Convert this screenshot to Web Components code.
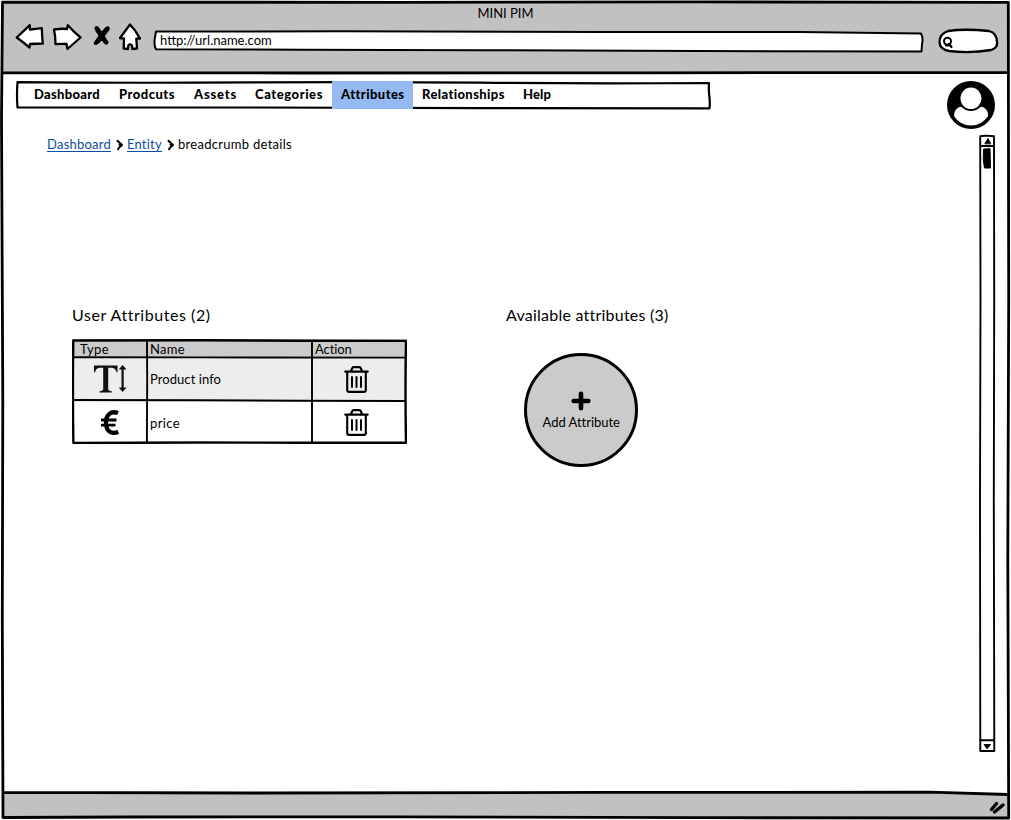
<!DOCTYPE html>
<html lang="en">
<head>
<meta charset="utf-8">
<title>MINI PIM</title>
<style>
html,body{margin:0;background:#fff;overflow:hidden}
body{font-family:Lato,"Open Sans",sans-serif;font-size:13px;color:#000}
</style>
</head>
<body>
<pim-app></pim-app>
<script>
const base = `<style>
*{box-sizing:border-box}
:host{display:block;position:relative}
svg{display:block;flex:none;fill:none;stroke:#000;stroke-linecap:round;stroke-linejoin:round}
.outline{position:absolute;left:0;top:0;pointer-events:none;overflow:visible}
</style>`;
function define(name, html, after) {
  const t = document.createElement('template');
  t.innerHTML = base + html;
  customElements.define(name, class extends HTMLElement {
    constructor() {
      super();
      this.attachShadow({mode: 'open'}).append(t.content.cloneNode(true));
    }
    connectedCallback() { if (after) after.call(this); }
  });
}

// A single-line label that spreads its letters over the width in "w".
define('ink-text', `<style>:host{display:inline-block;white-space:nowrap;flex:none}span{display:inline-block}</style><span><slot></slot></span>`, function () {
  const w = +this.getAttribute('w');
  const n = this.textContent.length;
  const natural = this.shadowRoot.querySelector('span').getBoundingClientRect().width;
  this.style.letterSpacing = ((w - natural) / n).toFixed(3) + 'px';
  this.style.width = w + 'px';
});

define('url-field', `<style>
:host{width:771px;height:24px;flex:none;padding-left:7px;line-height:22px}
ink-text{z-index:1}
</style>
<svg class="outline" width="771" height="24" viewBox="153 29 771 24"><path fill="#fff" stroke-width="2" d="M156 31.5L340 31.3L600 32L800 32L921 33.4Q923.5 38 922 44L921.5 51.5L700 51L480 50.2L300 49.7L156 49.2Q153.500 45 155 37Z"/></svg>
<ink-text w="115"><slot></slot></ink-text>`);

define('search-field', `<style>:host{width:61px;height:27px;flex:none}</style>
<svg width="61" height="27" viewBox="938 27 61 27"><path fill="#fff" stroke-width="2.300" d="M948 31Q965 28.500 989 31Q997 33 997 42Q998 48 991 50Q970 53.500 949 51Q939.500 49 939.500 42Q939.500 34 948 31Z"/><circle cx="947.500" cy="41.300" r="3.500" stroke-width="2"/><path stroke-width="2.200" d="M949 44L951.500 47M946 45.500L950 45.500"/></svg>`);

define('browser-bar', `<style>
:host{height:73px;background:#c1c1c1}
.title{height:22px;line-height:26px;display:flex;justify-content:center}
.tools{height:32px;display:flex;align-items:flex-start;padding-left:13px}
.tools svg{height:32px}
url-field{margin:7px 14px 0 12px}
search-field{margin-top:5px}
</style>
<div class="title"><ink-text w="56">MINI PIM</ink-text></div>
<div class="tools">
<svg width="38" viewBox="15 22 38 32"><path fill="#fff" stroke-width="2.300" d="M16.700 37.500L29.800 25.200L29.800 29.500Q36 29 41.800 28.200Q42 36 42.800 43.500L30 44L29.500 47.500Q23 42 16.700 37.500Z"/></svg>
<svg width="39" viewBox="53 22 39 32"><path fill="#fff" stroke-width="2.300" d="M54 29.500Q61 28.300 67 29L67.800 25.200Q74 32 80.500 37.500L67.500 49L66.500 44Q61 43.500 55.500 44.200Q55.500 36 54 29.500Z"/></svg>
<svg width="27" viewBox="92 22 27 32"><path fill="#000" stroke-width="1.200" d="M95 28Q96 25.500 98.500 27.800Q100.500 31 102 32.500Q105 27.500 107.500 26.800Q110 27.500 108.800 30Q106 33.500 104.200 36Q106 40 108 42Q107.500 45 105 43.700L101.700 39.500Q99 43.500 96 44.500Q93 44 95.200 41.500Q98.500 37.500 99.200 35.300Q96 32 95 28Z"/></svg>
<svg width="22" viewBox="119 22 22 32"><path fill="#fff" stroke-width="2.300" d="M130 24.500L120 38L124 38.500L123.700 48.500L128 49L128.300 45.500Q130 43.500 132 45.500L132.300 49L137 48.500L136.300 38.700L140 38.500Q135.500 30 130 24.500Z"/></svg>
<url-field>http://url.name.com</url-field>
<search-field></search-field>
</div>`);

define('nav-item', `<style>
:host{height:28px;line-height:27px;padding-left:9px;flex:none;font-weight:900;font-size:13px}
:host([active]){background:#95baf2}
</style><slot></slot>`, function () { this.style.width = this.getAttribute('box') + 'px'; });

define('nav-bar', `<style>
:host{width:695px;height:28px;display:flex;padding-left:9px}
</style>
<svg class="outline" width="695" height="28" viewBox="16 81 695 28"><path stroke-width="2.200" d="M17.500 82.200Q130 83.200 250 82.400T480 82.700T709 83Q708.500 90 709.300 96Q710.200 103 709.500 108.300L480 108.200L250 107.500L17.500 107.500Q16.500 95 17.500 82.200Z"/></svg>
<slot></slot>`);

define('crumb-trail', `<style>
:host{display:flex;line-height:18px}
.link{color:#0b4ea2;height:17px;border-bottom:1px solid #0b4ea2}
</style>
<ink-text class="link" w="64">Dashboard</ink-text>
<svg width="16" height="18" viewBox="111 136 16 18"><path stroke-width="2" d="M117.500 141.800Q120 144.500 122 145.800Q120 147 118 150.200M119.500 145.500L121.500 147"/></svg>
<ink-text class="link" w="35">Entity</ink-text>
<svg width="16" height="18" viewBox="162 136 16 18"><path stroke-width="2" d="M168.500 141.800Q171 144.500 173 145.800Q171 147 169 150.200M170.500 145.500L172.500 147"/></svg>
<ink-text w="114">breadcrumb details</ink-text>`);

define('user-avatar', `<style>:host{width:48px;height:48px}</style>
<svg width="48" height="48" viewBox="947 81 48 48"><g stroke="none"><circle cx="971" cy="105" r="24" fill="#000"/><path fill="#fff" d="M954.200 116.500C953.500 111 957.500 107 961 106.800Q965.500 111 971 111Q976.500 111 981 106.800C985.500 107 989 112 987.800 116.500Q981.500 125.500 971 125.500Q960.500 125.500 954.200 116.500Z"/><ellipse cx="971" cy="98.300" rx="10.500" ry="10.800" fill="#fff"/></g></svg>`);

define('scroll-track', `<style>:host{width:17px;height:619px}</style>
<svg width="17" height="619" viewBox="979 134 17 619"><path stroke-width="1.900" d="M980.200 136.300L986 135.600L994 136.300L994.200 300L993.800 500L994.300 751L980.300 751L980 500L980.500 300ZM980 146L994 146M980 740.300L994 740.300"/><path fill="#000" stroke-width="1" d="M985 143.500L988 138.500L990.500 143.500ZM984 149L990 148.700L990.500 168L984.500 168L983.300 160ZM984.500 744.500L990.500 744.500L987.300 748.500Z"/></svg>`);

define('trash-icon', `<style>:host{width:25px;height:27px}</style>
<svg width="25" height="27" viewBox="0 0 25 27"><path stroke-width="2.100" d="M1.200 5.600H23.800M7 5L8.300 2Q8.800 1.100 10 1.100H15Q16.200 1.100 16.700 2L18 5M3.200 6V24Q3.200 25.900 5.200 25.900H19.800Q21.800 25.900 21.800 24V6"/><path stroke-width="2" stroke-linecap="butt" d="M8 10.200V21.700M12.500 10.200V21.700M17 10.200V21.700"/></svg>`);
define('text-height-icon', `<style>:host{width:34px;height:28px}</style>
<svg width="34" height="28" viewBox="93 365 34 28"><g stroke="none" fill="#111"><path d="M94 365.500H117.500V372.300H116.500Q115.500 367.800 111.500 367.700H108.200V389Q108.200 391 111.700 391.200V392.400H99.500V391.200Q103.200 391 103.200 389V367.700H100Q96 367.800 95 372.300H94Z"/><path d="M122.600 365L126.500 369.500H123.700V387.500H126.500L122.600 392L118.700 387.500H121.500V369.500H118.700Z"/></g></svg>`);
define('euro-icon', `<style>:host{width:20px;height:27px}</style>
<svg width="20" height="27" viewBox="100 408 20 27"><path stroke-linecap="butt" stroke-width="4.300" d="M118 412C111 409.500 106 413.500 106 421.500C106 430.500 111 433.500 118.300 431"/><path stroke-width="2.800" stroke-linecap="butt" d="M101 419H116.500M101 424.200H115.500"/></svg>`);
define('plus-icon', `<style>:host{width:20px;height:20px}</style>
<svg width="20" height="20" viewBox="0 0 20 20"><path stroke-width="4.600" d="M10 2.700V17.300M2.700 10H17.300"/></svg>`);

define('attribute-row', `<style>
:host{display:grid;grid-template-columns:74px 165px 1fr;height:43.500px;align-items:center}
:host([head]){height:19px;background:#cbcbcb;line-height:16px;align-items:start}
:host([shaded]){background:#ededed}
.c{display:flex;align-items:center;justify-content:center;padding-bottom:1px}
.first{padding-left:2px}
.n{padding-left:4px;justify-content:flex-start}
:host([head]) .c{justify-content:flex-start;padding-left:4px;padding-top:2px}
:host([head]) .first{padding-left:8px}
.last{padding-right:6px}
</style>
<div class="c first"><slot name="type"></slot></div><div class="c n"><slot name="name"></slot></div><div class="c last"><slot name="action"></slot></div>`);

define('attribute-table', `<style>:host{width:335px;height:105px;overflow:hidden}</style>
<slot></slot>
<svg class="outline" width="335" height="105" viewBox="72 339 335 105"><path stroke-width="2.400" d="M73.300 340.500L200 340.200L300 340.800L406 340.900Q405 390 406 442.700L300 442.800L200 442.500L73.400 443Q72.500 390 73.300 340.500Z"/><path stroke-width="1.900" d="M74 357.200L200 357.400L405 357.600M74 400L200 400.300L300 400.700L405 401M147 341L147.200 380L146.900 442M312 341L312 442"/></svg>`);

define('add-attribute', `<style>
:host{width:114px;height:114px;border-radius:50%;border:3px solid #000;background:#cbcbcb;display:flex;flex-direction:column;align-items:center;padding-top:35px;line-height:18px}
ink-text{margin-top:2px}
</style><plus-icon></plus-icon><ink-text w="77">Add Attribute</ink-text>`);

define('status-bar', `<style>:host{height:25px;background:#c1c1c1;display:flex;justify-content:flex-end;padding:7px 4px 0 0}</style>
<svg width="16" height="15" viewBox="989 800 16 15"><path stroke-width="3.400" d="M991.500 809.500L996.500 803.500M994.500 812L1003 805"/></svg>`);

define('browser-window', `<style>
:host{width:1011px;height:820px;padding:0 2px 2px 2px;display:grid;grid-template-rows:73px 720px 25px;overflow:hidden;background:#fff}
.outline{z-index:2}
</style>
<browser-bar></browser-bar><slot></slot><status-bar></status-bar>
<svg class="outline" width="1011" height="820" viewBox="0 0 1011 820"><path stroke="none" fill="#fff" d="M0 0H1011V1.500H0ZM3 791H1007V793.500L940 792.500H3Z"/><path stroke-width="2.800" d="M2.500 2.200L400 2.300L700 1.900L1008.300 2.400L1008.700 300L1007.800 560L1008.700 818L700 817.700L400 816.800L130 817L3 817.500L2.300 620L2.800 400L1.500 118ZM2 72.700L300 73L650 72.800L1008 72.300M3 792.300L250 793L600 792.400L930 792.200L1008 794.500"/></svg>`);

define('pim-app', `<style>
.page{display:grid;grid-template-columns:1fr 49px;padding:8px 13px 0 14px}
.side{display:flex;flex-direction:column;align-items:flex-end}
user-avatar{margin-right:1px}
scroll-track{margin-top:5px}
crumb-trail{margin:26px 0 0 31px}
.panels{display:grid;grid-template-columns:434px 300px;margin:151px 0 0 56px}
.h{font-size:16px;line-height:22px;height:35px;display:flex}
add-attribute{margin:14px 0 0 18px}
</style>
<browser-window><div class="page">
<main>
<nav-bar>
<nav-item box="85"><ink-text w="66">Dashboard</ink-text></nav-item><nav-item box="75"><ink-text w="56">Prodcuts</ink-text></nav-item><nav-item box="61"><ink-text w="43">Assets</ink-text></nav-item><nav-item box="86"><ink-text w="68">Categories</ink-text></nav-item><nav-item active box="81"><ink-text w="63">Attributes</ink-text></nav-item><nav-item box="101"><ink-text w="83">Relationships</ink-text></nav-item><nav-item box="50"><ink-text w="28">Help</ink-text></nav-item>
</nav-bar>
<crumb-trail></crumb-trail>
<div class="panels">
<section><div class="h"><ink-text w="138">User Attributes (2)</ink-text></div>
<attribute-table>
<attribute-row head><ink-text slot="type" w="29">Type</ink-text><ink-text slot="name" w="35">Name</ink-text><ink-text slot="action" w="37">Action</ink-text></attribute-row>
<attribute-row shaded><text-height-icon slot="type"></text-height-icon><ink-text slot="name" w="71">Product info</ink-text><trash-icon slot="action"></trash-icon></attribute-row>
<attribute-row><euro-icon slot="type"></euro-icon><ink-text slot="name" w="30">price</ink-text><trash-icon slot="action"></trash-icon></attribute-row>
</attribute-table></section>
<section><div class="h"><ink-text w="162">Available attributes (3)</ink-text></div><add-attribute></add-attribute></section>
</div>
</main>
<div class="side"><user-avatar></user-avatar><scroll-track></scroll-track></div>
</div></browser-window>`);
</script>
</body>
</html>
